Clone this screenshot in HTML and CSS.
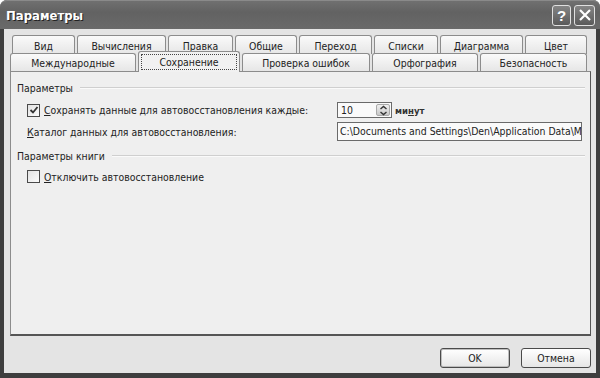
FILE: index.html
```html
<!DOCTYPE html>
<html lang="ru">
<head>
  <meta charset="UTF-8" />
  <title>Параметры</title>
  <link rel="stylesheet" href="styles.css">
</head>
<body>
  <div class="window">
    <div class="titlebar">
      <span class="title">Параметры</span>
      <div class="caption-buttons">
        <span class="cap-btn help">?</span>
        <span class="cap-btn close">
          <svg width="14" height="14" viewBox="0 0 14 14">
            <path d="M2 2 L12 12 M12 2 L2 12" stroke="#fff" stroke-width="2.2" fill="none" />
          </svg>
        </span>
      </div>
    </div>

    <div class="client">
      <div class="tabs">
        <div class="tab-row row-back">
          <div class="tab" style="width:63px">Вид</div>
          <div class="tab" style="width:89px">Вычисления</div>
          <div class="tab" style="width:65px">Правка</div>
          <div class="tab" style="width:62px">Общие</div>
          <div class="tab" style="width:73px">Переход</div>
          <div class="tab" style="width:64px">Списки</div>
          <div class="tab" style="width:83px">Диаграмма</div>
          <div class="tab" style="width:62px">Цвет</div>
        </div>
        <div class="tab-row row-front">
          <div class="tab" style="width:126px">Международные</div>
          <div class="tab selected" style="width:102px"><span class="focus">Сохранение</span></div>
          <div class="tab" style="width:128px">Проверка ошибок</div>
          <div class="tab" style="width:106px">Орфография</div>
          <div class="tab" style="width:107px">Безопасность</div>
        </div>
      </div>

      <div class="panel">
        <div class="group-title"><span>Параметры</span><span class="group-line"></span></div>

        <div class="field-row first">
          <label class="check">
            <span class="box checked">
              <svg width="10" height="10" viewBox="0 0 10 10">
                <path d="M1.5 5 L4 7.5 L8.5 2" stroke="#333" stroke-width="1.8" fill="none" />
              </svg>
            </span>
            <span><u>С</u>охранять данные для автовосстановления каждые:</span>
          </label>
          <div class="spin-wrap">
            <div class="spin-input">
              <span>10</span>
              <span class="spin-btn">
                <svg width="9" height="11" viewBox="0 0 9 11">
                  <path d="M1.5 4 L4.5 1.5 L7.5 4 M1.5 7 L4.5 9.5 L7.5 7" stroke="#333" stroke-width="1.4" fill="none" />
                </svg>
              </span>
            </div>
            <span class="unit">ми<u>н</u>ут</span>
          </div>
        </div>

        <div class="field-row second">
          <span class="plain-label"><u>К</u>аталог данных для автовосстановления:</span>
          <div class="path-input">C:\Documents and Settings\Den\Application Data\M</div>
        </div>

        <div class="group-title book"><span>Параметры книги</span><span class="group-line"></span></div>

        <div class="field-row third">
          <label class="check">
            <span class="box"></span>
            <span><u>О</u>тключить автовосстановление</span>
          </label>
        </div>
      </div>

      <div class="buttons">
        <button class="btn default">OK</button>
        <button class="btn">Отмена</button>
      </div>
    </div>
  </div>
</body>
</html>
```

FILE: styles.css
```css
body {
  margin: 0;
  background: #fff;
  font-family: "DejaVu Sans Condensed", "Liberation Sans", sans-serif;
  font-size: 10.4px;
  color: #222;
}

.window {
  width: 600px;
  height: 378px;
  box-sizing: border-box;
  background: #3e3e3e;
  border-radius: 7px 7px 0 0;
  padding: 0 4px 5px 4px;
  display: flex;
  flex-direction: column;
}

.titlebar {
  height: 29px;
  display: flex;
  align-items: center;
  justify-content: space-between;
  background: linear-gradient(#707070, #626262 40%, #6a6a6a);
  border-top: 1px solid #8a8a8a;
  border-radius: 7px 7px 0 0;
  margin: 0 -4px;
  padding-left: 6px;
  padding-right: 5px;
  box-sizing: border-box;
}

.title {
  color: #fff;
  font-family: "DejaVu Sans Condensed", sans-serif;
  font-weight: bold;
  font-size: 13px;
  text-shadow: 1px 1px 0 #222;
}

.caption-buttons {
  display: flex;
  gap: 3px;
}

.cap-btn {
  width: 19px;
  height: 21px;
  box-sizing: border-box;
  border: 1px solid #e0e0e0;
  border-radius: 3px;
  background: linear-gradient(#858585, #5a5a5a);
  color: #fff;
  display: flex;
  align-items: center;
  justify-content: center;
  font-family: "Liberation Sans", sans-serif;
  font-weight: bold;
  font-size: 15px;
}

.cap-btn.close {
  width: 21px;
}

.client {
  flex: 1;
  background: #e4e4e4;
  padding: 6px 5px 0 6px;
  display: flex;
  flex-direction: column;
}

.tabs {
  position: relative;
  z-index: 2;
  margin-bottom: -1px;
}

.tab-row {
  display: flex;
  gap: 2px;
  align-items: flex-start;
}

.row-back {
  padding-left: 2px;
  height: 18px;
}

.row-front {
  height: 19px;
}

.tab {
  height: 18px;
  box-sizing: border-box;
  border: 1px solid #8c8c8c;
  border-bottom: none;
  border-radius: 3px 3px 0 0;
  background: linear-gradient(#fafafa, #e6e6e6);
  display: flex;
  align-items: center;
  justify-content: center;
  padding-top: 1px;
}

.row-back .tab {
  height: 19px;
}

.tab.selected {
  position: relative;
  margin-top: -2px;
  height: 21px;
  background: #f1f1f1;
  padding-bottom: 2px;
}

.focus {
  border: 1px dotted #444;
  width: 94px;
  text-align: center;
  line-height: 14px;
}

.panel {
  height: 265px;
  box-sizing: border-box;
  background: #efefef;
  border: 1px solid #8c8c8c;
  border-right-color: #555;
  border-bottom: 2px solid #555;
  padding: 9px 5px 0 6px;
}

.group-title {
  display: flex;
  align-items: center;
  height: 13px;
  gap: 7px;
}

.group-title.book {
  margin-top: 8px;
}

.group-line {
  flex: 1;
  border-top: 1px solid #cfcfcf;
  border-bottom: 1px solid #fafafa;
}

.field-row {
  display: flex;
  align-items: center;
  padding-left: 10px;
}

.field-row.first {
  margin-top: 8px;
  height: 16px;
}

.field-row.second {
  margin-top: 4px;
  height: 19px;
}

.field-row.third {
  margin-top: 8px;
  height: 13px;
}

.check {
  display: flex;
  align-items: center;
  gap: 4px;
  width: 310px;
}

.plain-label {
  width: 310px;
}

.box {
  width: 11px;
  height: 11px;
  border: 1px solid #4a4a4a;
  background: linear-gradient(135deg, #e2e2e2, #fbfbfb);
  display: flex;
  align-items: center;
  justify-content: center;
}

.spin-wrap {
  display: flex;
  align-items: center;
  gap: 3px;
}

.spin-input {
  width: 55px;
  height: 16px;
  box-sizing: border-box;
  border: 1px solid #6a6a6a;
  background: #fafafa;
  display: flex;
  align-items: center;
  justify-content: space-between;
  padding: 0 1px 0 3px;
}

.spin-btn {
  width: 14px;
  height: 12px;
  border-radius: 2px;
  background: linear-gradient(#f0f0f0, #c8c8c8);
  border: 1px solid #aaa;
  box-sizing: border-box;
  display: flex;
  align-items: center;
  justify-content: center;
}

.unit {
  font-size: 9.5px;
  font-weight: bold;
  color: #333;
}

.path-input {
  width: 245px;
  height: 19px;
  box-sizing: border-box;
  border: 1px solid #6a6a6a;
  background: #fafafa;
  padding: 0 2px;
  line-height: 17px;
  white-space: nowrap;
  overflow: hidden;
}

.buttons {
  display: flex;
  justify-content: flex-end;
  gap: 11px;
  margin-top: 12px;
}

.btn {
  width: 70px;
  height: 20px;
  border: 1px solid #4a4a4a;
  border-radius: 3px;
  background: linear-gradient(#ffffff, #e6e6e6);
  font-family: inherit;
  font-size: 10.4px;
  color: #222;
  padding: 0;
}

.btn.default {
  box-shadow: inset 0 0 0 1px #bdbdbd;
}
```
